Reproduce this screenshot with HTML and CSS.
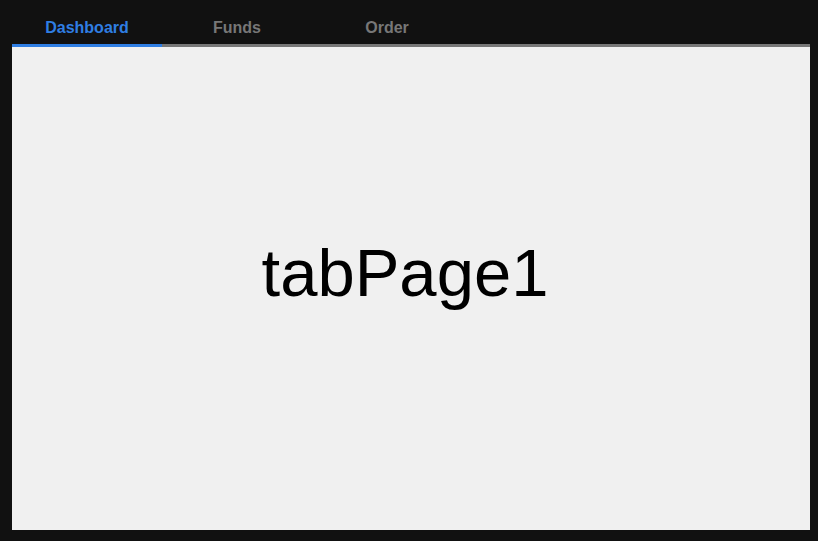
FILE: index.html
```html
<!DOCTYPE html>
<html lang="en">
<head>
  <meta charset="UTF-8">
  <meta name="viewport" content="width=device-width, initial-scale=1.0">
  <title>Tabs</title>
  <link rel="stylesheet" href="styles.css">
</head>
<body>

<div id="window">
  <div class="tab-bar">
    <div class="tab active">Dashboard</div>
    <div class="tab">Funds</div>
    <div class="tab">Order</div>
  </div>

  <div class="tab-page">
    <span class="page-label">tabPage1</span>
  </div>
</div>

</body>
</html>
```

FILE: styles.css
```css
body {
  margin: 0;
  background-color: #111111;
  font-family: "Liberation Sans", Arial, sans-serif;
}

#window {
  width: 818px;
  height: 541px;
  box-sizing: border-box;
  padding: 0 8px 11px 12px;
  display: flex;
  flex-direction: column;
}

.tab-bar {
  display: flex;
  height: 44px;
  border-bottom: 3px solid #777777;
}

.tab {
  width: 150px;
  text-align: center;
  font-size: 16px;
  font-weight: bold;
  color: #777777;
  padding-top: 19px;
  box-sizing: border-box;
}

.tab.active {
  color: #2f7ee3;
  border-bottom: 3px solid #2f7ee3;
  height: 47px;
}

.tab-page {
  flex: 1;
  background-color: #f0f0f0;
  display: flex;
  align-items: center;
  justify-content: center;
  padding-right: 12px;
  padding-bottom: 32px;
}

.page-label {
  font-size: 67px;
  color: #000000;
}
```
